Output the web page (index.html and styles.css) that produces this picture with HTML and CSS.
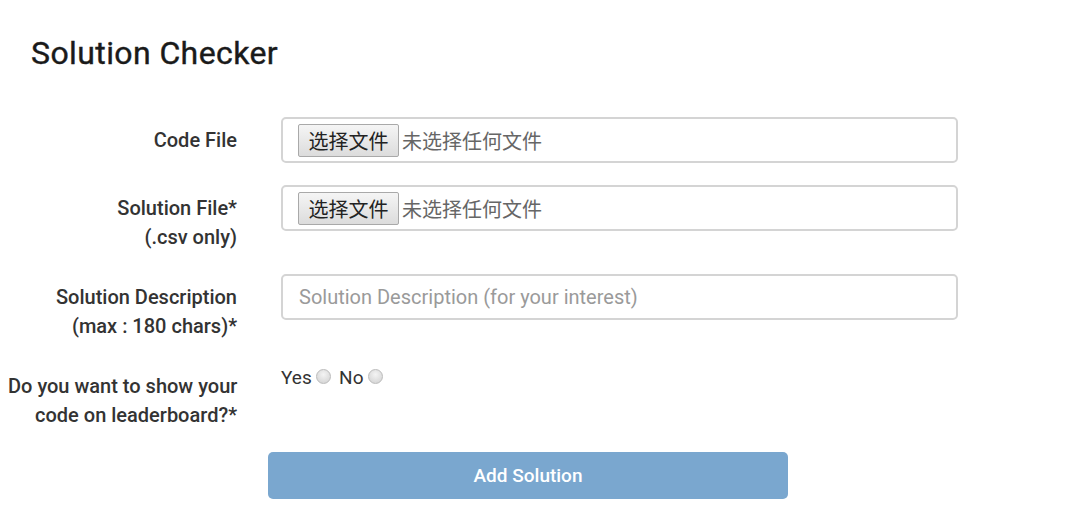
FILE: index.html
```html
<!DOCTYPE html>
<html lang="en">
<head>
    <meta charset="UTF-8">
    <title>Solution Checker</title>
    <link rel="stylesheet" href="styles.css">
</head>
<body>
    <div class="container">
        <h1>Solution Checker</h1>
        <form id="solutionForm" class="form-horizontal">
            <div class="form-group">
                <label class="control-label">Code File</label>
                <div class="field">
                    <div class="file-input">
                        <span class="file-button">选择文件</span>
                        <span class="file-name">未选择任何文件</span>
                    </div>
                </div>
            </div>
            <div class="form-group">
                <label class="control-label">Solution File*<br>(.csv only)</label>
                <div class="field">
                    <div class="file-input">
                        <span class="file-button">选择文件</span>
                        <span class="file-name">未选择任何文件</span>
                    </div>
                </div>
            </div>
            <div class="form-group">
                <label class="control-label" for="description">Solution Description<br>(max : 180 chars)*</label>
                <div class="field">
                    <input type="text" id="description" class="form-control" placeholder="Solution Description (for your interest)">
                </div>
            </div>
            <div class="form-group">
                <label class="control-label">Do you want to show your<br>code on leaderboard?*</label>
                <div class="field radios">
                    Yes <input type="radio" name="show_code" value="yes">
                    No <input type="radio" name="show_code" value="no">
                </div>
            </div>
            <button type="submit" class="btn-submit">Add Solution</button>
        </form>
    </div>
</body>
</html>
```

FILE: styles.css
```css
body {
    font-family: Roboto, 'Liberation Sans', sans-serif;
    margin: 0;
    background: #fff;
    color: #333;
}
.container {
    padding: 0 8px;
}
h1 {
    margin: 0;
    padding: 33px 0 0 23px;
    font-size: 32px;
    font-weight: 400;
    letter-spacing: 0.4px;
    line-height: 40px;
    color: #1a1a1a;
    -webkit-text-stroke: 0.4px #1a1a1a;
}
.form-horizontal {
    margin-top: 44px;
}
.form-group {
    display: grid;
    grid-template-columns: 229px 677px;
    column-gap: 44px;
    margin-bottom: 22px;
    min-height: 46px;
}
.control-label {
    text-align: right;
    font-size: 20px;
    font-weight: 500;
    line-height: 29px;
    padding-top: 9px;
    color: #333;
    white-space: nowrap;
}
.file-input,
.form-control {
    box-sizing: border-box;
    width: 100%;
    height: 46px;
    border: 2px solid #d4d4d4;
    border-radius: 5px;
    background: #fff;
}
.file-input {
    display: flex;
    align-items: center;
    padding-left: 15px;
    font-family: 'Noto Sans CJK SC', sans-serif;
    font-size: 20px;
}
.file-button {
    box-sizing: border-box;
    height: 33px;
    width: 101px;
    line-height: 31px;
    text-align: center;
    border: 1px solid #a9a9a9;
    border-radius: 2px;
    background: linear-gradient(#f5f5f5, #dcdcdc);
    color: #222;
}
.file-name {
    margin-left: 3px;
    color: #666;
}
.form-control {
    padding: 0 16px;
    font-family: Roboto, sans-serif;
    font-size: 20px;
    color: #555;
    outline: none;
}
.form-control::placeholder {
    color: #9a9a9a;
}
.radios {
    font-size: 19px;
    line-height: 29px;
    color: #333;
}
.radios input {
    appearance: none;
    width: 15px;
    height: 15px;
    margin: 0 3px 0 0;
    border-radius: 50%;
    border: 1px solid #bbb;
    background: radial-gradient(circle at 50% 35%, #f4f4f4, #cfcfcf);
    vertical-align: 0;
}
.btn-submit {
    display: block;
    margin-left: 260px;
    width: 520px;
    height: 47px;
    background: #7aa7cf;
    color: #fff;
    border: none;
    border-radius: 5px;
    font-family: Roboto, sans-serif;
    font-size: 19px;
    font-weight: 500;
    cursor: pointer;
}
```
